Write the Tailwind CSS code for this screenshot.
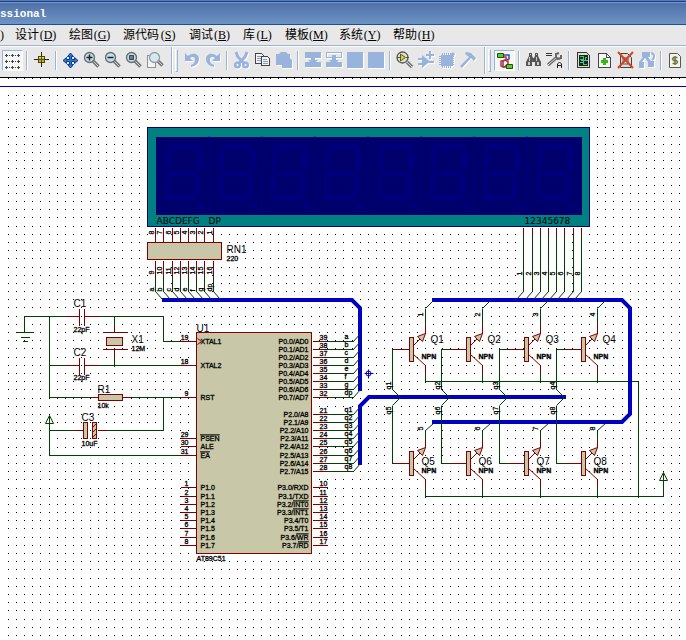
<!DOCTYPE html>
<html lang="zh-CN">
<head>
<meta charset="utf-8">
<title>Professional</title>
<script src="https://cdn.jsdelivr.net/npm/@tailwindcss/browser@4"></script>
</head>
<body class="min-h-screen flex flex-col overflow-x-hidden bg-white text-black">

<header class="flex-none">
  <div class="h-px bg-[#5878b4]"></div>
  <div class="h-px bg-[#1c3c7c]"></div>
  <div class="h-px bg-[#6c9cdc]"></div>
  <div class="h-[21px] flex items-center bg-linear-to-b from-[#5070a8] to-[#6c94c4]">
    <h1 class="font-['Liberation_Mono','Noto_Sans_CJK_SC',monospace] text-[11px] leading-4 font-bold text-white">ssional</h1>
  </div>
  <div class="h-px bg-[#204c94]"></div>

  <nav aria-label="菜单" class="h-5 flex items-center gap-3 overflow-hidden whitespace-nowrap bg-[#e8e8e8] font-['Liberation_Serif','Noto_Sans_CJK_SC',serif] text-xs leading-5">
    <button class="w-[3px] flex justify-start">)</button>
    <button class="flex items-center">设计<span class="w-[18px] text-center">(<u>D</u>)</span></button>
    <button class="flex items-center">绘图<span class="w-[18px] text-center">(<u>G</u>)</span></button>
    <button class="flex items-center">源代码<span class="w-[18px] text-center">(<u>S</u>)</span></button>
    <button class="flex items-center">调试<span class="w-[18px] text-center">(<u>B</u>)</span></button>
    <button class="flex items-center">库<span class="w-[18px] text-center">(<u>L</u>)</span></button>
    <button class="flex items-center">模板<span class="w-[18px] text-center">(<u>M</u>)</span></button>
    <button class="flex items-center">系统<span class="w-[18px] text-center">(<u>Y</u>)</span></button>
    <button class="flex items-center">帮助<span class="w-[18px] text-center">(<u>H</u>)</span></button>
  </nav>
  <div class="h-px bg-[#98b4dc]"></div>
  <div class="h-px bg-white"></div>

  <div role="toolbar" aria-label="工具栏" class="h-[31px] flex items-center pl-[2px] pb-1 overflow-hidden bg-[#e8e8e8] border-b border-black *:flex-none">
    <button aria-label="网格" class="size-[21px] border border-[#98b4dc] border-r-white border-b-white bg-[#f6f6f6]">
      <svg class="size-[19px]" viewBox="0 0 19 19" shape-rendering="crispEdges"><path stroke="#444" d="M2 4.500h3M8 4.500h3M14 4.500h3M2 10.500h3M8 10.500h3M14 10.500h3M2 16.500h3M8 16.500h3M14 16.500h3M3.500 3v3M9.500 3v3M15.500 3v3M3.500 9v3M9.500 9v3M15.500 9v3M3.500 15v3M9.500 15v3M15.500 15v3M6 4.500h1M12 4.500h1M6 10.500h1M12 10.500h1M6 16.500h1M12 16.500h1"/></svg>
    </button>
    <span class="w-2 h-[19px] flex justify-center"><i class="w-[2px] border-l border-[#98b4dc] bg-white"></i></span>
    <button aria-label="原点" class="size-[21px]">
      <svg class="size-[21px]" viewBox="0 0 21 21" shape-rendering="crispEdges"><path stroke="#222" d="M3 9.500h15M10.500 2v15"/><path fill="#c4b428" stroke="#4c4400" d="M7.500 6.500h6v6h-6z"/><path stroke="#f0e470" d="M8 7.500h5"/><path stroke="#5c5408" d="M8 9.500h5M10.500 7v5"/></svg>
    </button>
    <span class="w-2 h-[19px] flex justify-center"><i class="w-[2px] border-l border-[#98b4dc] bg-white"></i></span>
    <button aria-label="平移" class="size-[21px]">
      <svg class="size-[21px]" viewBox="0 0 21 21"><path fill="#2878d8" stroke="#0c3c88" d="M10.500 3l3 3.500h-2v3h3v-2l3.500 3-3.500 3v-2h-3v3h2l-3 3.500-3-3.500h2v-3h-3v2l-3.500-3 3.500-3v2h3v-3h-2z"/></svg>
    </button>
    <button aria-label="放大" class="size-[21px]">
      <svg class="size-[21px]" viewBox="0 0 21 21"><path d="M12 11l5.500 5.500" stroke="#777" stroke-width="3.500"/><path d="M12 11l5 5" stroke="#ccc"/><circle cx="8.500" cy="7.500" r="5" fill="#c4dce4" stroke="#5c7078" stroke-width="1.300"/><path stroke="#222" stroke-width="1.500" d="M5.500 7.500h6M8.500 4.500v6"/></svg>
    </button>
    <button aria-label="缩小" class="size-[21px]">
      <svg class="size-[21px]" viewBox="0 0 21 21"><path d="M12 11l5.500 5.500" stroke="#777" stroke-width="3.500"/><path d="M12 11l5 5" stroke="#ccc"/><circle cx="8.500" cy="7.500" r="5" fill="#c4dce4" stroke="#5c7078" stroke-width="1.300"/><path stroke="#222" stroke-width="1.500" d="M5.500 7.500h6"/></svg>
    </button>
    <button aria-label="全图" class="size-[21px]">
      <svg class="size-[21px]" viewBox="0 0 21 21"><path d="M12 11l5.500 5.500" stroke="#777" stroke-width="3.500"/><path d="M12 11l5 5" stroke="#ccc"/><circle cx="8.500" cy="7.500" r="5" fill="#c4dce4" stroke="#5c7078" stroke-width="1.300"/><path fill="#778" stroke="#444" d="M6.500 5.500h4v4h-4z"/></svg>
    </button>
    <button aria-label="区域缩放" class="size-[21px]">
      <svg class="size-[21px]" viewBox="0 0 21 21"><path fill="#f4f4f4" stroke="#333" stroke-dasharray="1 1" d="M3.500 5.500h8v12h-8z"/><path d="M14 11l4.500 4.500" stroke="#777" stroke-width="3.500"/><path d="M14 11l4 4" stroke="#ccc"/><circle cx="10.500" cy="7.500" r="5" fill="#d4e8ee" stroke="#8ca0a8" stroke-width="1.300"/></svg>
    </button>
    <span class="w-4 h-[27px] flex items-center pl-[6px] gap-[2px]"><i class="w-[2px] h-full border-l border-[#98b4dc] bg-white"></i><i class="w-[3px] h-[23px] bg-[#e8e8e8] border-l border-l-white border-t border-t-white border-r border-r-[#98b4dc] border-b border-b-[#98b4dc]"></i></span>
    <button aria-label="撤销" class="size-[21px]">
      <svg class="size-[21px] drop-shadow-[1px_1px_0_#fff]" viewBox="0 0 21 21"><path fill="#98b4dc" d="M4 3v8h8l-3-3c3-2 5-1 5 2 0 2-1 4-4 5v2c5-1 8-4 8-8 0-5-6-7-11-3z"/></svg>
    </button>
    <button aria-label="重做" class="size-[21px]">
      <svg class="size-[21px] drop-shadow-[1px_1px_0_#fff]" viewBox="0 0 21 21"><path fill="#98b4dc" d="M18 3v8h-8l3-3c-3-2-5-1-5 2 0 2 1 4 4 5v2c-5-1-8-4-8-8 0-5 6-7 11-3z"/></svg>
    </button>
    <span class="w-2 h-[19px] flex justify-center"><i class="w-[2px] border-l border-[#98b4dc] bg-white"></i></span>
    <button aria-label="剪切" class="size-[21px]">
      <svg class="size-[21px] drop-shadow-[1px_1px_0_#fff]" viewBox="0 0 21 21" fill="none" stroke="#98b4dc"><path stroke-width="3" d="M5 2l2 5 7 7M16 2l-2 5-7 7"/><circle cx="6.500" cy="15" r="2.300" stroke-width="2.500"/><circle cx="14.500" cy="15" r="2.300" stroke-width="2.500"/></svg>
    </button>
    <button aria-label="复制" class="size-[21px]">
      <svg class="size-[21px]" viewBox="0 0 21 21" shape-rendering="crispEdges" fill="#f4f4f4" stroke="#444"><path d="M3.500 3.500h6l2 2v8h-8z"/><path stroke="#8898b8" d="M5 6.500h4M5 8.500h4M5 10.500h4"/><path d="M9.500 6.500h6l2 2v7h-8z"/><path stroke="#8898b8" d="M11 9.500h4M11 11.500h5M11 13.500h5"/></svg>
    </button>
    <button aria-label="粘贴" class="size-[21px]">
      <svg class="size-[21px] drop-shadow-[1px_1px_0_#fff]" viewBox="0 0 21 21"><path fill="#98b4dc" d="M3 4h3l2-2h5l2 2h2v4l2 2v8H9v-3H3z"/></svg>
    </button>
    <span class="w-2 h-[19px] flex justify-center"><i class="w-[2px] border-l border-[#98b4dc] bg-white"></i></span>
    <button aria-label="块复制" class="size-[21px]">
      <svg class="size-[21px] drop-shadow-[1px_1px_0_#fff]" viewBox="0 0 21 21"><path fill="#98b4dc" d="M3 2h16v6h-6v2h3l-2 2h5v5H3v-5h5l-2-2h3V8H3z"/></svg>
    </button>
    <button aria-label="块移动" class="size-[21px]">
      <svg class="size-[21px] drop-shadow-[1px_1px_0_#fff]" viewBox="0 0 21 21"><path fill="#98b4dc" fill-rule="evenodd" d="M3 2h16v6h-6v2h3l-2 2h5v5H3v-5h5l-2-2h3V8H3zM4 3v4h5V5h4v2h5V3z"/></svg>
    </button>
    <button aria-label="块旋转" class="size-[21px]">
      <svg class="size-[21px] drop-shadow-[1px_1px_0_#fff]" viewBox="0 0 21 21"><path fill="#98b4dc" d="M3 2h16v16H3z"/></svg>
    </button>
    <button aria-label="块删除" class="size-[21px]">
      <svg class="size-[21px] drop-shadow-[1px_1px_0_#fff]" viewBox="0 0 21 21"><path fill="#98b4dc" d="M3 2h16v16H3z"/></svg>
    </button>
    <span class="w-2 h-[19px] flex justify-center"><i class="w-[2px] border-l border-[#98b4dc] bg-white"></i></span>
    <button aria-label="拾取元件" class="size-[21px]">
      <svg class="size-[21px]" viewBox="0 0 21 21"><path d="M13 12l5 5" stroke="#777" stroke-width="3.500"/><path d="M13 12l5 5" stroke="#ccc"/><circle cx="8.500" cy="7.500" r="5.500" fill="#dce4d8" stroke="#555" stroke-width="1.300"/><path fill="#d8d040" stroke="#555c20" d="M6.500 4v7l5-3.500zM3 7.500h3M12 7.500h3"/></svg>
    </button>
    <button aria-label="制作元件" class="size-[21px]">
      <svg class="size-[21px] drop-shadow-[1px_1px_0_#fff]" viewBox="0 0 21 21"><path fill="#98b4dc" d="M7 5l8 6.500L7 18v-3H3v-2h4v-3H3V8h4zM14 11h5v2h-5zM14 1h2v3h3v2h-3v3h-2V6h-3V4h3z"/></svg>
    </button>
    <button aria-label="封装" class="size-[21px]">
      <svg class="size-[21px] drop-shadow-[1px_1px_0_#fff]" viewBox="0 0 21 21"><path fill="#98b4dc" d="M5 5h9l3-3 2 2-2 3v9H5z"/><path stroke="#98b4dc" d="M6.500 3v15M8.500 3v15M10.500 3v15M12.500 3v15M14.500 3v15M3 6.500h15M3 8.500h15M3 10.500h15M3 12.500h15M3 14.500h15"/></svg>
    </button>
    <button aria-label="分解" class="size-[21px]">
      <svg class="size-[21px] drop-shadow-[1px_1px_0_#fff]" viewBox="0 0 21 21"><path fill="#98b4dc" d="M9 2l5 1 5 5-2 3-3-3-9 10-2-2 9-9-4-3z"/></svg>
    </button>
    <span class="w-4 h-[27px] flex items-center pl-[6px] gap-[2px]"><i class="w-[2px] h-full border-l border-[#98b4dc] bg-white"></i><i class="w-[3px] h-[23px] bg-[#e8e8e8] border-l border-l-white border-t border-t-white border-r border-r-[#98b4dc] border-b border-b-[#98b4dc]"></i></span>
    <button aria-label="自动布线" class="size-[21px] border border-[#98b4dc] border-r-white border-b-white bg-[#f6f6f6]">
      <svg class="size-[19px]" viewBox="0 0 19 19"><path fill="none" stroke="#2850c8" stroke-width="1.500" d="M9 4h5v4l-6 2v6h3"/><path fill="none" stroke="#d82810" stroke-width="1.500" d="M8 6h3v3l-5 1v5l3 1 4-3v-3h-2"/><path fill="#60c830" stroke="#205010" d="M2.500 2.500h6v4h-6zM11.500 13.500h6v4h-6z"/></svg>
    </button>
    <span class="w-2 h-[19px] flex justify-center"><i class="w-[2px] border-l border-[#98b4dc] bg-white"></i></span>
    <button aria-label="查找" class="size-[21px]">
      <svg class="size-[21px]" viewBox="0 0 21 21"><path fill="#555" d="M6 3h3v3l1 2h1l1-2V3h3v3l3 6v4h-6v-4H9v4H3v-4l3-6z"/><path fill="#ccc" d="M6 7h1v4H6zM13 7h1v4h-1zM5 12h2v3H5zM14 12h2v3h-2zM7 4h1v1H7zM13 4h1v1h-1z"/></svg>
    </button>
    <button aria-label="属性工具" class="size-[21px]">
      <svg class="size-[21px]" viewBox="0 0 21 21"><path stroke="#333" d="M2 3.500h6M2 5.500h6"/><path fill="none" stroke="#666" stroke-width="3" d="M4 15l8-7"/><path fill="none" stroke="#ddd" d="M4 15l8-7"/><path fill="none" stroke="#666" stroke-width="2" d="M15 3l-3 1v3l2 2 3-1V5"/><path fill="none" stroke="#222" d="M13.500 18v-4l2-2 2 2v4M14 15.500h3"/></svg>
    </button>
    <span class="w-2 h-[19px] flex justify-center"><i class="w-[2px] border-l border-[#98b4dc] bg-white"></i></span>
    <button aria-label="设计浏览器" class="size-[21px]">
      <svg class="size-[21px]" viewBox="0 0 21 21" shape-rendering="crispEdges"><path fill="#ddd" stroke="#333" d="M4.500 2.500h9l3 3v12h-12z"/><path fill="#182818" d="M6 5h9v11H6z"/><path fill="none" stroke="#40d040" d="M7 6.500h3v3H7M14 7.500h-2v3h3M7 12.500h3v2h4"/><path stroke="#40b8e0" d="M8 10.500h6M10.500 8v5"/></svg>
    </button>
    <button aria-label="新建图纸" class="size-[21px]">
      <svg class="size-[21px]" viewBox="0 0 21 21" shape-rendering="crispEdges"><path fill="#f8f8f8" stroke="#444" d="M4.500 3.500h8l4 4v10h-12z"/><path fill="none" stroke="#444" d="M12.500 4v3.500h4"/><path fill="#38b818" d="M9 8h3v2h2v3h-2v2H9v-2H7v-3h2z"/></svg>
    </button>
    <button aria-label="删除图纸" class="size-[21px]">
      <svg class="size-[21px]" viewBox="0 0 21 21"><path fill="#ddd" stroke="#444" d="M5.500 3.500h7l4 4v10h-11z"/><path fill="none" stroke="#555" d="M8 8h5v6H8z"/><path stroke="#d84020" stroke-width="2" d="M3 2l15 16M18 2L3 18"/></svg>
    </button>
    <button aria-label="层次" class="size-[21px]">
      <svg class="size-[21px] drop-shadow-[1px_1px_0_#fff]" viewBox="0 0 21 21"><path fill="#98b4dc" d="M6 2h8v5h-2l3 4h3v6h-6v-5L9 8l-3 4h2v6H3v-6l4-5H6z"/><path fill="none" stroke="#98b4dc" stroke-width="2" d="M15 3c4 1 4 5 1 7"/></svg>
    </button>
    <span class="w-2 h-[19px] flex justify-center"><i class="w-[2px] border-l border-[#98b4dc] bg-white"></i></span>
    <button aria-label="材料清单" class="size-[21px]">
      <svg class="size-[21px]" viewBox="0 0 21 21"><path fill="#f4f4f0" stroke="#555" d="M4.500 3.500h8l3 3v11h-11z"/><path fill="none" stroke="#707840" stroke-width="1.500" d="M12.500 7.500h-4L7.500 9l1 1.500h3l1 1.500-1 1.500h-4M10 6v9"/></svg>
    </button>
  </div>
</header>

<main class="grow flex">
  <svg id="sheet" role="img" aria-label="原理图" class="block w-full min-h-[562px] font-['Liberation_Sans',sans-serif] text-[7px]" fill="none">
    <g transform="translate(0 -78)">
      <path id="dots" fill="#000" shape-rendering="crispEdges"/>
      <path fill="#0000a8" shape-rendering="crispEdges" d="M0 86h4000v1H0z"/>
    </g>
    <g id="draw" transform="translate(0.5 -77.5)">
      <!-- display -->
      <g shape-rendering="crispEdges">
        <path fill="#008080" stroke="#000080" d="M147 127h442v99H147z"/>
        <path fill="#00006c" d="M155 136h426v78H155z"/>
      </g>
      <g id="digits" fill="#00007c"></g>
      <!-- components -->
      <g stroke="#800000" fill="#c8c8a8" shape-rendering="crispEdges">
        <path d="M147 242h74v17h-74z"/>
        <path d="M196 332h115v221H196z"/>
        <path d="M106 337h16v8h-16zM98 394h24v6H98zM83 422h4v16h-4zM92 422h4v16h-4z"/>
        <path d="M65 316h14M79 308v17M84 308v17M84 316h15M65 365h14M79 357v17M84 357v17M84 365h15M114 324v8M102 332h25M102 349h25M114 349v8M90 397h8M122 397h9M73 430h10M97 430h10"/>
      </g>
      <path stroke="#800000" d="M92 427l4-4M92 432l4-4M92 437l4-4M197 338l4 3-4 3"/>
      <!-- wires -->
      <g stroke="#004000" shape-rendering="crispEdges">
        <path d="M65 316H24V332M16 332h17M20 337h9M22 341h5M99 316h64v25h17M49 315v82h41M49 365h16M99 365h81M114 315v9M114 357v9M131 397h49M163 396v34h-56M73 430H49M49 415v40h131"/>
        <path d="M425 381h213v116M425 496h238v-24"/>
      </g>
      <path stroke="#004000" d="M49 415l-4 8h8zM663 472l-4 8h8z"/>
      <!-- buses -->
      <g stroke="#0000c0" stroke-width="4" transform="translate(-0.5 -0.5)">
        <path d="M162 300H352L360 308V391"/>
        <path d="M566 397H369L360 406V465"/>
        <path d="M432 300H622L630 308V414L622 422H432"/>
      </g>
      <!-- cursor -->
      <g stroke="#0000c0"><path d="M364 373h9M368 369v9"/><circle cx="368" cy="373" r="2.500"/></g>
      <!-- labels -->
      <g fill="#000" font-family="'DejaVu Sans', sans-serif" font-size="9">
        <text x="156" y="223">ABCDEFG</text><text x="208" y="223">DP</text><text x="524" y="223">12345678</text>
      </g>
      <g fill="#000" font-size="10">
        <text x="226" y="252">RN1</text><text x="73" y="306">C1</text><text x="73" y="355">C2</text><text x="131" y="342">X1</text>
        <text x="97" y="392">R1</text><text x="81" y="420">C3</text><text x="196" y="331">U1</text>
      </g>
      <g fill="#000" stroke="#000" stroke-width="0.3">
        <text x="226" y="260">220</text><text x="73" y="331">22pF</text><text x="73" y="379">22pF</text><text x="131" y="350">12M</text>
        <text x="97" y="407">10k</text><text x="81" y="445">10uF</text><text x="196" y="560">AT89C51</text>
      </g>
    </g>
  </svg>
</main>

<script>
const NS = 'http://www.w3.org/2000/svg';
const RED = '#800000', GREEN = '#004000';
const INK = { fill: '#000', stroke: '#000', 'stroke-width': 0.3 };
const root = document.getElementById('draw');

function add(tag, attrs, parent = root) {
  const el = document.createElementNS(NS, tag);
  for (const k in attrs) el.setAttribute(k, attrs[k]);
  parent.appendChild(el);
  return el;
}
const straight = (d, stroke) => add('path', { d, stroke, 'shape-rendering': 'crispEdges' });
const slant = (d, stroke) => add('path', { d, stroke });
function label(x, y, s, extra = {}) {
  add('text', { x, y, ...INK, ...extra }).textContent = s;
}
const upright = (x, y, s) => label(x, y, s, { transform: `rotate(-90 ${x} ${y})` });

// grid dots
let d = '';
for (let j = 0; j < 160; j++)
  for (let i = 0; i < 320; i++)
    d += `M${Math.floor(8.23 + 8.185 * i)} ${Math.floor(78.8 + 8.185 * j)}h1v1h-1z`;
document.getElementById('dots').setAttribute('d', d);

// seven-segment digits
const digits = document.getElementById('digits');
for (let n = 0; n < 8; n++) {
  const g = add('g', { transform: `translate(${155 + 53 * n} 136)` }, digits);
  add('path', { d: 'M13 7h30l3 3-4 3H17l-5-3zM11 10l5 4-1 17-3 4-2-2zM47 11v20l-3 4-4-4 1-17zM13 35h27l3 2-4 3H15l-4-3zM10 39l5 4-1 14-5 3zM43 39l2 3-1 18-6-3 1-15zM14 58h24l5 4-3 2H11l-2-2z' }, g);
  add('circle', { cx: 45, cy: 69, r: 3 }, g);
  if (n) add('path', { d: 'M0 0h1v78H0z' }, g);
}

// resistor network
const rn = [155, 163, 172, 180, 188, 196, 204, 213];
const seg = ['a', 'b', 'c', 'd', 'e', 'f', 'g', 'dp'];
rn.forEach((x, i) => {
  straight(`M${x} 227V242M${x} 260V275`, RED);
  straight(`M${x} 275V291`, GREEN);
  slant(`M${x} 291l7 8`, GREEN);
  upright(x - 2, 234, 8 - i);
  upright(x - 2, 274, 9 + i);
  upright(x - 2, 291, seg[i]);
});

// digit select lines
[523, 532, 540, 548, 556, 564, 573, 581].forEach((x, i) => {
  straight(`M${x} 227V235`, RED);
  straight(`M${x} 235V291`, GREEN);
  slant(`M${x} 291l-7 8`, GREEN);
  upright(x - 2, 275, i + 1);
});

// microcontroller pins
function leftPin(y, num, name, over) {
  straight(`M180 ${y}H196`, RED);
  label(188, y - 2, num, { 'text-anchor': 'end' });
  label(200, y + 2, name, over ? { 'text-decoration': 'overline' } : {});
}
leftPin(341, 19, 'XTAL1'); leftPin(365, 18, 'XTAL2'); leftPin(397, 9, 'RST');
leftPin(438, 29, 'PSEN', true); leftPin(446, 30, 'ALE'); leftPin(455, 31, 'EA', true);
const low = [487, 496, 504, 512, 520, 528, 537, 545];
low.forEach((y, i) => leftPin(y, i + 1, 'P1.' + i));

function rightPin(y, num, name, net, over) {
  straight(`M312 ${y}H327`, RED);
  label(319, y - 2, num);
  const t = add('text', { x: 308, y: y + 2, ...INK, 'text-anchor': 'end' });
  t.textContent = name;
  if (over) add('tspan', { 'text-decoration': 'overline' }, t).textContent = over;
  if (net) {
    straight(`M327 ${y}H353`, GREEN);
    slant(`M353 ${y}l7 -8`, GREEN);
    label(344, y - 3, net);
  }
}
[341, 349, 357, 365, 373, 381, 389, 397].forEach((y, i) => rightPin(y, 39 - i, `P0.${i}/AD${i}`, seg[i]));
[414, 422, 430, 438, 446, 455, 463, 471].forEach((y, i) => rightPin(y, 21 + i, `P2.${i}/A${8 + i}`, 'q' + (i + 1)));
const alt = [['RXD'], ['TXD'], ['', 'INT0'], ['', 'INT1'], ['T0'], ['T1'], ['', 'WR'], ['', 'RD']];
low.forEach((y, i) => rightPin(y, 10 + i, `P3.${i}/${alt[i][0]}`, null, alt[i][1]));

// transistors
function transistor(x, y) {
  straight(`M${x - 32} ${y}H${x - 16}M${x} ${y - 16}v-9M${x} ${y + 16}v8`, RED);
  slant(`M${x - 12} ${y - 4}L${x} ${y - 16}M${x - 12} ${y + 5}L${x} ${y + 16}`, RED);
  add('path', { d: `M${x - 16} ${y - 12}h4v24h-4z`, fill: '#c8c8a8', stroke: RED, 'shape-rendering': 'crispEdges' });
  add('path', { d: `M${x} ${y - 16}l-8 3 5 5z`, fill: '#c8c8a8', stroke: RED });
}
const base = [392, 441, 499, 556];
[425, 482, 540, 597].forEach((x, i) => {
  transistor(x, 349);
  transistor(x, 463);
  const b = base[i];
  straight(`M${x - 32} 349H${b}V389M${b} 405V463H${x - 32}`, GREEN);
  slant(`M${b} 389l8 8l-8 8`, GREEN);
  straight(`M${x} 324V308M${x} 373V382M${x} 438V430M${x} 487V497`, GREEN);
  slant(`M${x} 308l8 -8M${x} 430l8 -7`, GREEN);
  upright(x - 3, 316, i + 1);
  upright(x - 3, 430, i + 5);
  upright(b - 2, 389, 'q' + (i + 1));
  upright(b - 2, 414, 'q' + (i + 5));
  label(x + 5, 342, 'Q' + (i + 1), { 'font-size': 10, stroke: 'none' });
  label(x - 4, 464, 'Q' + (i + 5), { 'font-size': 10, stroke: 'none' });
  label(x - 4, 358, 'NPN', { 'font-weight': 'bold' });
  label(x - 4, 472, 'NPN', { 'font-weight': 'bold' });
});
</script>
</body>
</html>
